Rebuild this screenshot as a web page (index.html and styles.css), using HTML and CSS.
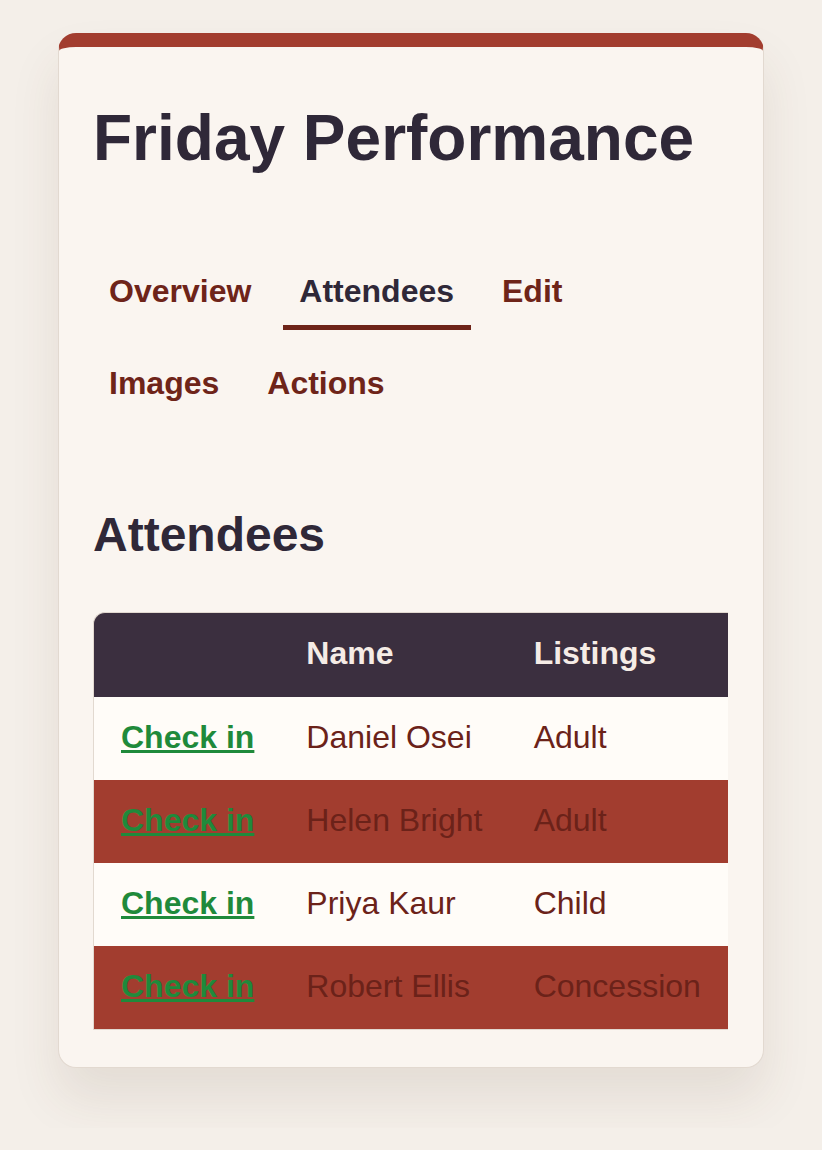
FILE: index.html
```html
<!DOCTYPE html>
<html lang="en">
<head>
  <meta charset="UTF-8">
  <meta name="viewport" content="width=device-width, initial-scale=1.0">
  <title>Friday Performance</title>
  <link rel="stylesheet" href="styles.css">
</head>
<body>
  <div class="card">
    <h1>Friday Performance</h1>

    <nav class="tabs">
      <a href="#" class="tab">Overview</a>
      <a href="#" class="tab active">Attendees</a>
      <a href="#" class="tab">Edit</a>
      <a href="#" class="tab">Images</a>
      <a href="#" class="tab">Actions</a>
    </nav>

    <h2>Attendees</h2>

    <div class="table-wrap">
      <table class="attendees">
        <thead>
          <tr>
            <th></th>
            <th>Name</th>
            <th>Listings</th>
          </tr>
        </thead>
        <tbody>
          <tr>
            <td><a href="#" class="checkin">Check in</a></td>
            <td>Daniel Osei</td>
            <td>Adult</td>
          </tr>
          <tr>
            <td><a href="#" class="checkin">Check in</a></td>
            <td>Helen Bright</td>
            <td>Adult</td>
          </tr>
          <tr>
            <td><a href="#" class="checkin">Check in</a></td>
            <td>Priya Kaur</td>
            <td>Child</td>
          </tr>
          <tr>
            <td><a href="#" class="checkin">Check in</a></td>
            <td>Robert Ellis</td>
            <td>Concession</td>
          </tr>
        </tbody>
      </table>
    </div>
  </div>
</body>
</html>
```

FILE: styles.css
```css
body {
  margin: 0;
  padding: 33px 0 60px;
  background-color: #f4efe9;
  font-family: "Liberation Sans", Arial, sans-serif;
  color: #2f2838;
}
.card {
  width: 636px;
  margin: 0 auto;
  padding: 34px 34px 37px;
  background-color: #faf5f0;
  border: 1px solid #e2d9d0;
  border-top: 14px solid #a23d2f;
  border-radius: 18px;
  box-shadow: 0 30px 50px rgba(90, 60, 40, 0.1);
}
h1 {
  font-size: 64px;
  line-height: 74px;
  margin: 20px 0 83px;
  color: #2f2838;
}
.tabs {
  display: flex;
  flex-wrap: wrap;
  column-gap: 15px;
  row-gap: 20px;
}
.tab {
  display: block;
  padding: 15px 17px 15px 16px;
  font-size: 32px;
  line-height: 37px;
  font-weight: bold;
  color: #6e2419;
  text-decoration: none;
  border-bottom: 5px solid transparent;
}
.tab.active {
  color: #2f2838;
  border-bottom-color: #6e2419;
}
h2 {
  font-size: 48px;
  line-height: 55px;
  margin: 85px 0 50px;
  color: #2f2838;
}
.table-wrap {
  width: 100%;
}
.attendees {
  border-collapse: separate;
  border-spacing: 0;
  width: 635px;
  font-size: 32px;
  line-height: 37px;
  color: #6b2219;
}
.attendees th,
.attendees td {
  padding: 22px 26px 24px;
  text-align: left;
}
.attendees th {
  padding-bottom: 25px;
  background-color: #3b2f3f;
  color: #f5ece6;
  border-top: 1px solid #e2d9d0;
}
.attendees th:nth-child(2),
.attendees td:nth-child(2) {
  padding-right: 24px;
}
.attendees th:first-child {
  border-top-left-radius: 12px;
}
.attendees th:first-child,
.attendees td:first-child {
  border-left: 1px solid #e2d9d0;
  padding-left: 27px;
  padding-right: 25px;
}
.attendees tbody tr:nth-child(odd) td {
  background-color: #fffcf8;
}
.attendees tbody tr:nth-child(even) td {
  background-color: #a23d2f;
}
.attendees tbody tr:last-child td {
  border-bottom: 1px solid #e2d9d0;
}
.checkin {
  color: #1f8a3b;
  font-weight: bold;
  text-decoration: underline;
}
```
